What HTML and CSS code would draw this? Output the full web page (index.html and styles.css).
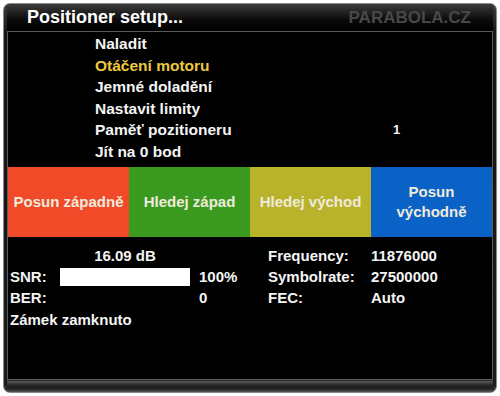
FILE: index.html
```html
<!DOCTYPE html>
<html lang="cs">
<head>
<meta charset="utf-8">
<title>Positioner setup</title>
<link rel="stylesheet" href="styles.css">
</head>
<body>
<div class="frame">
  <div class="titlebar">
    <span class="title">Positioner setup...</span>
    <span class="brand">PARABOLA.CZ</span>
  </div>
  <div class="content">
    <ul class="menu">
      <li class="item">Naladit</li>
      <li class="item selected">Otáčení motoru</li>
      <li class="item">Jemné doladění</li>
      <li class="item">Nastavit limity</li>
      <li class="item">Paměť pozitioneru<span class="num">1</span></li>
      <li class="item">Jít na 0 bod</li>
    </ul>
    <div class="keys">
      <div class="key red">Posun západně</div>
      <div class="key green">Hledej západ</div>
      <div class="key yellow">Hledej východ</div>
      <div class="key blue">Posun<br>východně</div>
    </div>
    <div class="info">
      <span></span><span class="db">16.09 dB</span><span></span>
      <span class="lab2">Frequency:</span><span>11876000</span>

      <span>SNR:</span><span class="bar"></span><span class="val">100%</span>
      <span class="lab2">Symbolrate:</span><span>27500000</span>

      <span>BER:</span><span></span><span class="val">0</span>
      <span class="lab2">FEC:</span><span>Auto</span>

      <span class="lock">Zámek zamknuto</span>
    </div>
  </div>
  <div class="footer"></div>
</div>
</body>
</html>
```

FILE: styles.css
```css
html, body {
  margin: 0;
  padding: 0;
  background: #fff;
}
body {
  font-family: "Liberation Sans", Arial, sans-serif;
  font-weight: bold;
  color: #f4f4f4;
}
.frame {
  margin: 3px;
  width: 494px;
  height: 390px;
  box-sizing: border-box;
  border-radius: 7px;
  border: 1px solid #8a8a8a;
  background: linear-gradient(#3c3c3c, #151515 30px, #1a1a1a 380px, #3a3a3a);
  display: flex;
  flex-direction: column;
  padding: 0 3px;
  overflow: hidden;
}
.titlebar {
  height: 27px;
  flex: none;
  display: flex;
  align-items: center;
  justify-content: space-between;
  padding: 0 22px 0 20px;
  background: linear-gradient(#3a3a3a, #0a0a0a 60%, #000);
}
.title {
  font-size: 18px;
  color: #fff;
}
.brand {
  font-size: 17px;
  color: #484848;
}
.content {
  flex: 1;
  background: #000;
  border: 1px solid #5a5a5a;
  display: flex;
  flex-direction: column;
}
.menu {
  list-style: none;
  margin: 0;
  padding: 1px 0 0 87px;
  font-size: 15.5px;
  line-height: 21.5px;
}
.item {
  display: flex;
}
.selected {
  color: #ecc93c;
}
.num {
  margin-left: auto;
  width: 99px;
  font-size: 13px;
}
.keys {
  margin-top: 5px;
  height: 70px;
  display: grid;
  grid-template-columns: repeat(4, 1fr);
  font-size: 15px;
  color: #efeadb;
  text-align: center;
}
.key {
  display: flex;
  align-items: center;
  justify-content: center;
  line-height: 20px;
}
.red { background: #f04a28; }
.green { background: #3a9a20; }
.yellow { background: #b9b32c; }
.blue { background: #0a62c6; }
.info {
  display: grid;
  grid-template-columns: 50px 130px 78px 103px 1fr;
  grid-auto-rows: 21px;
  align-items: center;
  padding: 8px 0 0 2px;
  font-size: 15px;
}
.db {
  text-align: center;
}
.bar {
  height: 18px;
  background: #fff;
}
.val {
  padding-left: 9px;
}
.lock {
  grid-column: 1 / 4;
  margin-top: 2px;
}
.footer {
  height: 11px;
  flex: none;
  border-top: 1px solid #2a2a2a;
  background: linear-gradient(#5a5a5a, #252525 40%, #202020 70%, #555);
}
```
